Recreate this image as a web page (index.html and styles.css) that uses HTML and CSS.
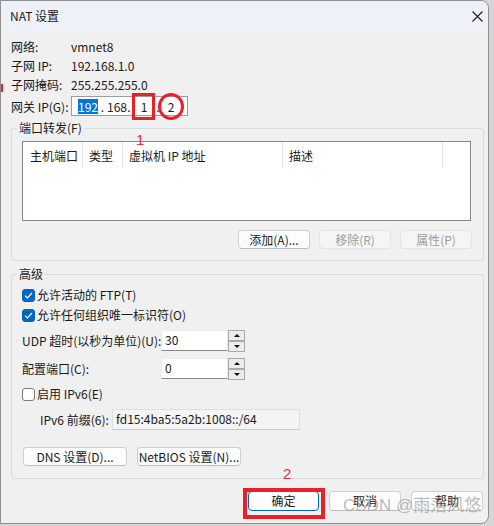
FILE: index.html
```html
<!DOCTYPE html>
<html lang="zh-CN">
<head>
<meta charset="utf-8">
<title>NAT 设置</title>
<link rel="stylesheet" href="styles.css">
</head>
<body>
<div class="window">
  <div class="titlebar">
    <span class="title">NAT 设置</span>
    <svg class="close" width="11" height="11" viewBox="0 0 11 11"><path d="M0.5 0.5 L10.5 10.5 M10.5 0.5 L0.5 10.5" stroke="#1b1b1b" stroke-width="1.1" fill="none"/></svg>
  </div>
  <div class="content">
    <div class="info-row"><span class="info-label">网络:</span><span>vmnet8</span></div>
    <div class="info-row"><span class="info-label">子网 IP:</span><span>192.168.1.0</span></div>
    <div class="info-row"><span class="info-label">子网掩码:</span><span>255.255.255.0</span></div>
    <div class="gw-row">
      <span class="info-label">网关 IP(G):</span>
      <div class="ip-box">
        <span class="seg seg1 sel">192</span><span class="dot dot1">.</span><span class="seg seg2">168</span><span class="dot dot2">.</span><span class="seg seg3">1</span><span class="dot dot3">.</span><span class="seg seg4">2</span>
      </div>
    </div>

    <fieldset class="group group-fwd">
      <legend>端口转发(F)</legend>
      <div class="list">
        <div class="list-head">
          <span class="col col1">主机端口</span>
          <span class="col col2">类型</span>
          <span class="col col3">虚拟机 IP 地址</span>
          <span class="col col4">描述</span>
        </div>
      </div>
      <div class="btn-row">
        <button class="btn">添加(A)...</button>
        <button class="btn" disabled>移除(R)</button>
        <button class="btn" disabled>属性(P)</button>
      </div>
    </fieldset>

    <fieldset class="group group-adv">
      <legend>高级</legend>
      <label class="check-row first"><span class="cb on"><svg width="9" height="7" viewBox="0 0 9 7"><path d="M1 3.6 L3.4 6 L8 1" stroke="#fff" stroke-width="1.2" fill="none"/></svg></span>允许活动的 FTP(T)</label>
      <label class="check-row"><span class="cb on"><svg width="9" height="7" viewBox="0 0 9 7"><path d="M1 3.6 L3.4 6 L8 1" stroke="#fff" stroke-width="1.2" fill="none"/></svg></span>允许任何组织唯一标识符(O)</label>
      <div class="spin-row udp">
        <span class="spin-label">UDP 超时(以秒为单位)(U):</span>
        <div class="spin-input">30</div>
        <div class="spinner">
          <span class="sp-btn"><span class="tri-up"></span></span>
          <span class="sp-btn"><span class="tri-down"></span></span>
        </div>
      </div>
      <div class="spin-row port">
        <span class="spin-label">配置端口(C):</span>
        <div class="spin-input">0</div>
        <div class="spinner">
          <span class="sp-btn"><span class="tri-up"></span></span>
          <span class="sp-btn"><span class="tri-down"></span></span>
        </div>
      </div>
      <label class="check-row ipv6"><span class="cb"></span>启用 IPv6(E)</label>
      <div class="prefix-row">
        <span class="prefix-label">IPv6 前缀(6):</span>
        <div class="prefix-field">fd15:4ba5:5a2b:1008::/64</div>
      </div>
      <div class="adv-btns">
        <button class="btn wide">DNS 设置(D)...</button>
        <button class="btn wide">NetBIOS 设置(N)...</button>
      </div>
    </fieldset>

    <div class="footer">
      <button class="btn default">确定</button>
      <button class="btn">取消</button>
      <button class="btn">帮助</button>
    </div>
  </div>

  <span class="mark-left"></span>
  <span class="box-ann"></span>
  <span class="circle-ann"></span>
  <span class="num-ann num1">1</span>
  <span class="num-ann num2">2</span>
  <span class="box-ok"></span>
  <span class="watermark">CSDN @雨落风悠</span>
</div>
</body>
</html>
```
FILE: styles.css
```css
* { box-sizing: border-box; }
html, body { margin: 0; padding: 0; }
body {
  width: 494px;
  height: 526px;
  background: #d6d6d6;
  font-family: "Noto Sans CJK SC", "Noto Sans", sans-serif;
  font-size: 12px;
  color: #1a1a1a;
  overflow: hidden;
}
.window {
  position: relative;
  width: 489px;
  height: 524px;
  background: #f0f0f0;
  border: 1px solid #8f8f8f;
  border-radius: 0 8px 8px 0;
  overflow: hidden;
}
.titlebar {
  height: 30px;
  background: #eef2f8;
  display: flex;
  align-items: center;
  justify-content: space-between;
  padding: 0 5px 0 9px;
}
.title { font-size: 12px; line-height: 16px; }
.content { padding: 6px 0 0 10px; }
.info-row {
  display: flex;
  align-items: center;
  height: 19px;
  line-height: 16px;
}
.info-label { width: 60px; flex: none; }
.gw-row {
  display: flex;
  align-items: center;
  height: 22px;
  margin-top: 1px;
}
.ip-box {
  width: 117px;
  height: 20px;
  border: 1px solid #9c9c9c;
  background: #fff;
  display: flex;
  align-items: center;
  padding-left: 6px;
  line-height: 15px;
}
.seg { text-align: center; flex: none; }
.seg1 { width: 20px; }
.seg2 { width: 18px; }
.seg3 { width: 22px; }
.seg4 { width: 20px; }
.sel { background: #0078d7; color: #fff; }
.dot { text-align: center; flex: none; }
.dot1 { width: 9px; }
.dot2 { width: 8px; }
.dot3 { width: 6px; }

.group {
  width: 473px;
  margin: 3px 0 0 0;
  border: 1px solid #dadada;
  border-radius: 3px;
  padding: 0 10px;
}
.group legend {
  padding: 0 2px;
  margin-left: -5px;
  line-height: 16px;
  font-size: 12px;
}
.list {
  margin-top: 5px;
  width: 449px;
  height: 80px;
  background: #fff;
  border: 1px solid #838790;
}
.list-head { display: flex; height: 26px; }
.col {
  display: flex;
  align-items: center;
  padding-left: 6px;
  border-right: 1px solid #e6e6e6;
  flex: none;
}
.col1 { width: 60px; padding-left: 7px; }
.col2 { width: 40px; }
.col3 { width: 160px; }
.col4 { width: 160px; }

.btn-row {
  display: flex;
  justify-content: flex-end;
  gap: 9px;
  margin: 9px 1px 0 0;
  padding-bottom: 11px;
}
.btn {
  font-family: inherit;
  font-size: 12px;
  color: #1a1a1a;
  width: 72px;
  height: 19px;
  padding: 0;
  line-height: 16px;
  background: #fdfdfd;
  border: 1px solid #d0d0d0;
  border-bottom-color: #bcbcbc;
  border-radius: 4px;
}
.btn:disabled {
  color: #9d9d9d;
  background: #f5f5f5;
  border-color: #e3e3e3;
}
.btn.wide { width: 104px; }
.btn.default { width: 71px; border: 1px solid #0067c0; }

.group-adv { margin-top: 5px; }
.check-row {
  display: flex;
  align-items: center;
  height: 20px;
  line-height: 16px;
}
.check-row.first { margin-top: 3px; }
.cb {
  width: 13px;
  height: 13px;
  border: 1px solid #7a7a7a;
  border-radius: 3px;
  background: #fff;
  margin-right: 2px;
  display: flex;
  align-items: center;
  justify-content: center;
  flex: none;
}
.cb.on { background: #0067c0; border-color: #0067c0; }
.spin-row {
  display: flex;
  align-items: center;
  height: 21px;
}
.spin-row.udp { margin-top: 5px; }
.spin-row.port { margin-top: 7px; }
.spin-label { width: 139px; flex: none; white-space: nowrap; }
.spin-input {
  width: 67px;
  height: 21px;
  background: #fff;
  border: 1px solid #ececec;
  border-bottom-color: #8a8a8a;
  padding-left: 3px;
  line-height: 17px;
}
.spinner {
  width: 17px;
  height: 22px;
  display: flex;
  flex-direction: column;
}
.sp-btn {
  height: 11px;
  border: 1px solid #a9a9a9;
  background: #ececec;
  display: flex;
  align-items: center;
  justify-content: center;
}
.tri-up {
  width: 0; height: 0;
  border-left: 3px solid transparent;
  border-right: 3px solid transparent;
  border-bottom: 3px solid #111;
}
.tri-down {
  width: 0; height: 0;
  border-left: 3px solid transparent;
  border-right: 3px solid transparent;
  border-top: 3px solid #111;
}
.check-row.ipv6 { margin-top: 5px; }
.prefix-row {
  display: flex;
  align-items: center;
  height: 21px;
  margin-top: 5px;
}
.prefix-label { width: 90px; padding-left: 18px; flex: none; }
.prefix-field {
  width: 188px;
  height: 21px;
  background: #f4f4f4;
  border: 1px solid #dedede;
  border-bottom-color: #c8c8c8;
  padding-left: 3px;
  line-height: 18px;
}
.adv-btns {
  display: flex;
  gap: 10px;
  margin: 17px 0 0 1px;
  padding-bottom: 12px;
}
.footer {
  width: 473px;
  display: flex;
  justify-content: flex-end;
  gap: 10px;
  margin-top: 12px;
  padding-right: 1px;
}
.footer .btn { height: 20px; }

/* annotations overlaid on the screenshot */
.mark-left {
  position: absolute;
  left: -1px; top: 83px;
  width: 3px; height: 8px;
  background: #e8202a;
}
.box-ann {
  position: absolute;
  left: 131px; top: 92px;
  width: 23px; height: 27px;
  border: 3px solid #e8202a;
}
.circle-ann {
  position: absolute;
  left: 157px; top: 92px;
  width: 26px; height: 27px;
  border: 3px solid #e8202a;
  border-radius: 50%;
}
.num-ann {
  position: absolute;
  color: #e8313f;
  font-family: "Liberation Sans", sans-serif;
  font-size: 15px;
  line-height: 16px;
}
.num1 { left: 135px; top: 131px; }
.num2 { left: 282px; top: 465px; }
.box-ok {
  position: absolute;
  left: 242px; top: 487px;
  width: 82px; height: 31px;
  border: 4px solid #e8202a;
}
.watermark {
  position: absolute;
  left: 342px; top: 495px;
  font-family: "Liberation Sans", "Noto Sans CJK SC", sans-serif;
  font-size: 17px;
  line-height: 20px;
  color: rgba(150, 150, 150, 0.65);
  white-space: nowrap;
}
```
